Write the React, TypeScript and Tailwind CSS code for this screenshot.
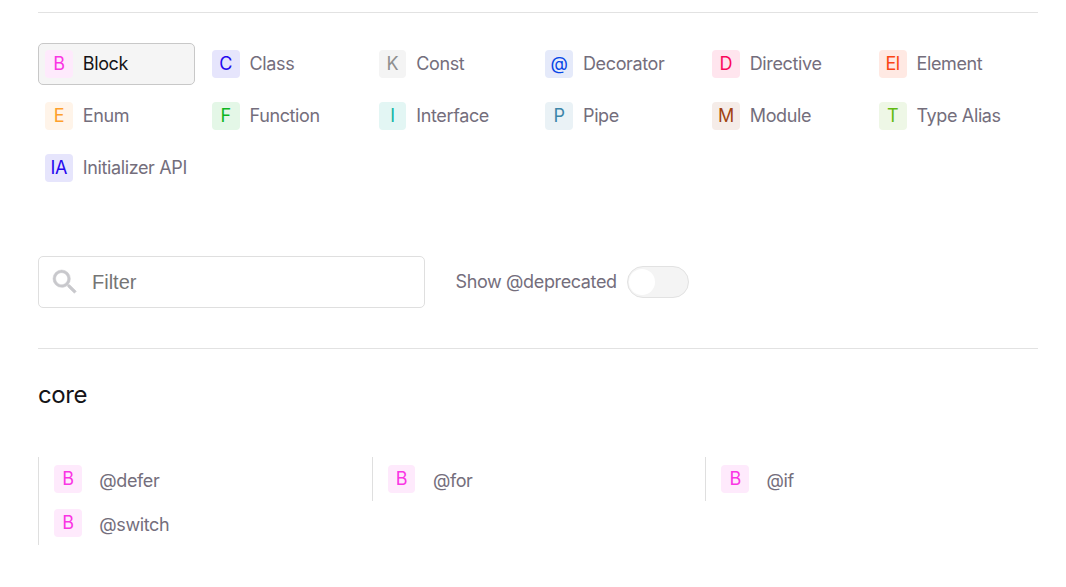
import clsx from 'clsx';

const types: [string, string, string][] = [
  ['B', 'Block', 'bg-[#feeafc] text-[#fa35e4]'],
  ['C', 'Class', 'bg-[#e6e5fc] text-[#2508ef]'],
  ['K', 'Const', 'bg-[#f4f4f4] text-[#8f8f8f]'],
  ['@', 'Decorator', 'bg-[#e5eafa] text-[#0546e6]'],
  ['D', 'Directive', 'bg-[#ffe5ee] text-[#fa0a5b]'],
  ['El', 'Element', 'bg-[#ffe9e3] text-[#fa4515]'],
  ['E', 'Enum', 'bg-[#fff4e9] text-[#fe9f2c]'],
  ['F', 'Function', 'bg-[#e4f7e7] text-[#0cb620]'],
  ['I', 'Interface', 'bg-[#e3f6f4] text-[#0cb5a4]'],
  ['P', 'Pipe', 'bg-[#eaf2f6] text-[#3c86a9]'],
  ['M', 'Module', 'bg-[#f5ece8] text-[#a24312]'],
  ['T', 'Type Alias', 'bg-[#eef7e6] text-[#61ba10]'],
  ['IA', 'Initializer API', 'bg-[#e6e5fc] text-[#2508ef]'],
];

function Badge({ label, color }: { label: string; color: string }) {
  return (
    <span className={clsx('flex h-[27.75px] w-[27.75px] shrink-0 items-center justify-center rounded-[4px] pb-[1.5px]', color)}>
      {label}
    </span>
  );
}

export default function App() {
  return (
    <main className="h-[587px] overflow-hidden bg-white pt-3 pl-[38px] font-['Inter',sans-serif] text-[18px] font-[415] tracking-[-0.37px] text-[#746e7c]">
      <div className="w-[1000px]">
        <div className="border-t border-[#e2e2e2]" />
        <div className="mt-[30px] grid w-[990.5px] grid-cols-6 gap-[10px]">
          {types.map(([label, name, color], i) => (
            <button
              key={name}
              className={clsx(
                'flex h-[42px] items-center gap-[10px] rounded-[5px] border pl-[6px] whitespace-nowrap',
                i === 0 ? 'border-[#c8c8c8] bg-[#f5f5f5] text-[#151417]' : 'border-transparent',
              )}
            >
              <Badge label={label} color={color} />
              <span className="-mt-px">{name}</span>
            </button>
          ))}
        </div>
        <div className="mt-[67px] flex items-center">
          <label className="flex h-[52px] w-[387px] items-center gap-[11px] rounded-[5px] border border-[#dfdfdf] pl-[10px]">
            <svg viewBox="0 0 24 24" className="h-8 w-8 fill-[#c8c8cc] stroke-[#c8c8cc] stroke-[0.4]">
              <path d="M15.5 14h-.79l-.28-.27A6.471 6.471 0 0 0 16 9.5 6.5 6.5 0 1 0 9.5 16c1.61 0 3.09-.59 4.23-1.57l.27.28v.79l5 4.99L20.49 19l-4.99-5zm-6 0C7.01 14 5 11.99 5 9.5S7.01 5 9.5 5 14 7.01 14 9.5 11.99 14 9.5 14z" />
            </svg>
            <input
              placeholder="Filter"
              className="w-[320px] font-['Liberation_Sans',sans-serif] text-[20px] font-normal tracking-normal outline-none placeholder:text-[#757575]"
            />
          </label>
          <span className="-mt-px ml-[30.5px]">Show @deprecated</span>
          <span className="ml-auto mr-[349px] flex h-8 w-[62px] items-center rounded-full border border-[#e2e2e2] bg-[#f4f4f4] pl-px">
            <span className="h-[26px] w-[26px] rounded-full bg-white" />
          </span>
        </div>
        <div className="mt-10 border-t border-[#e2e2e2]" />
        <h2 className="mt-7 text-[24px] leading-9 tracking-[-0.4px] text-[#151417]">core</h2>
        <ul className="mt-[44px] grid w-[1001px] grid-cols-3">
          {['@defer', '@for', '@if', '@switch'].map((name) => (
            <li key={name} className="flex h-11 items-center gap-[17.5px] border-l border-[#dfdfdf] pl-[15px]">
              <Badge label="B" color="bg-[#feeafc] text-[#fa35e4]" />
              <span className="pt-[2px]">{name}</span>
            </li>
          ))}
        </ul>
      </div>
    </main>
  );
}
